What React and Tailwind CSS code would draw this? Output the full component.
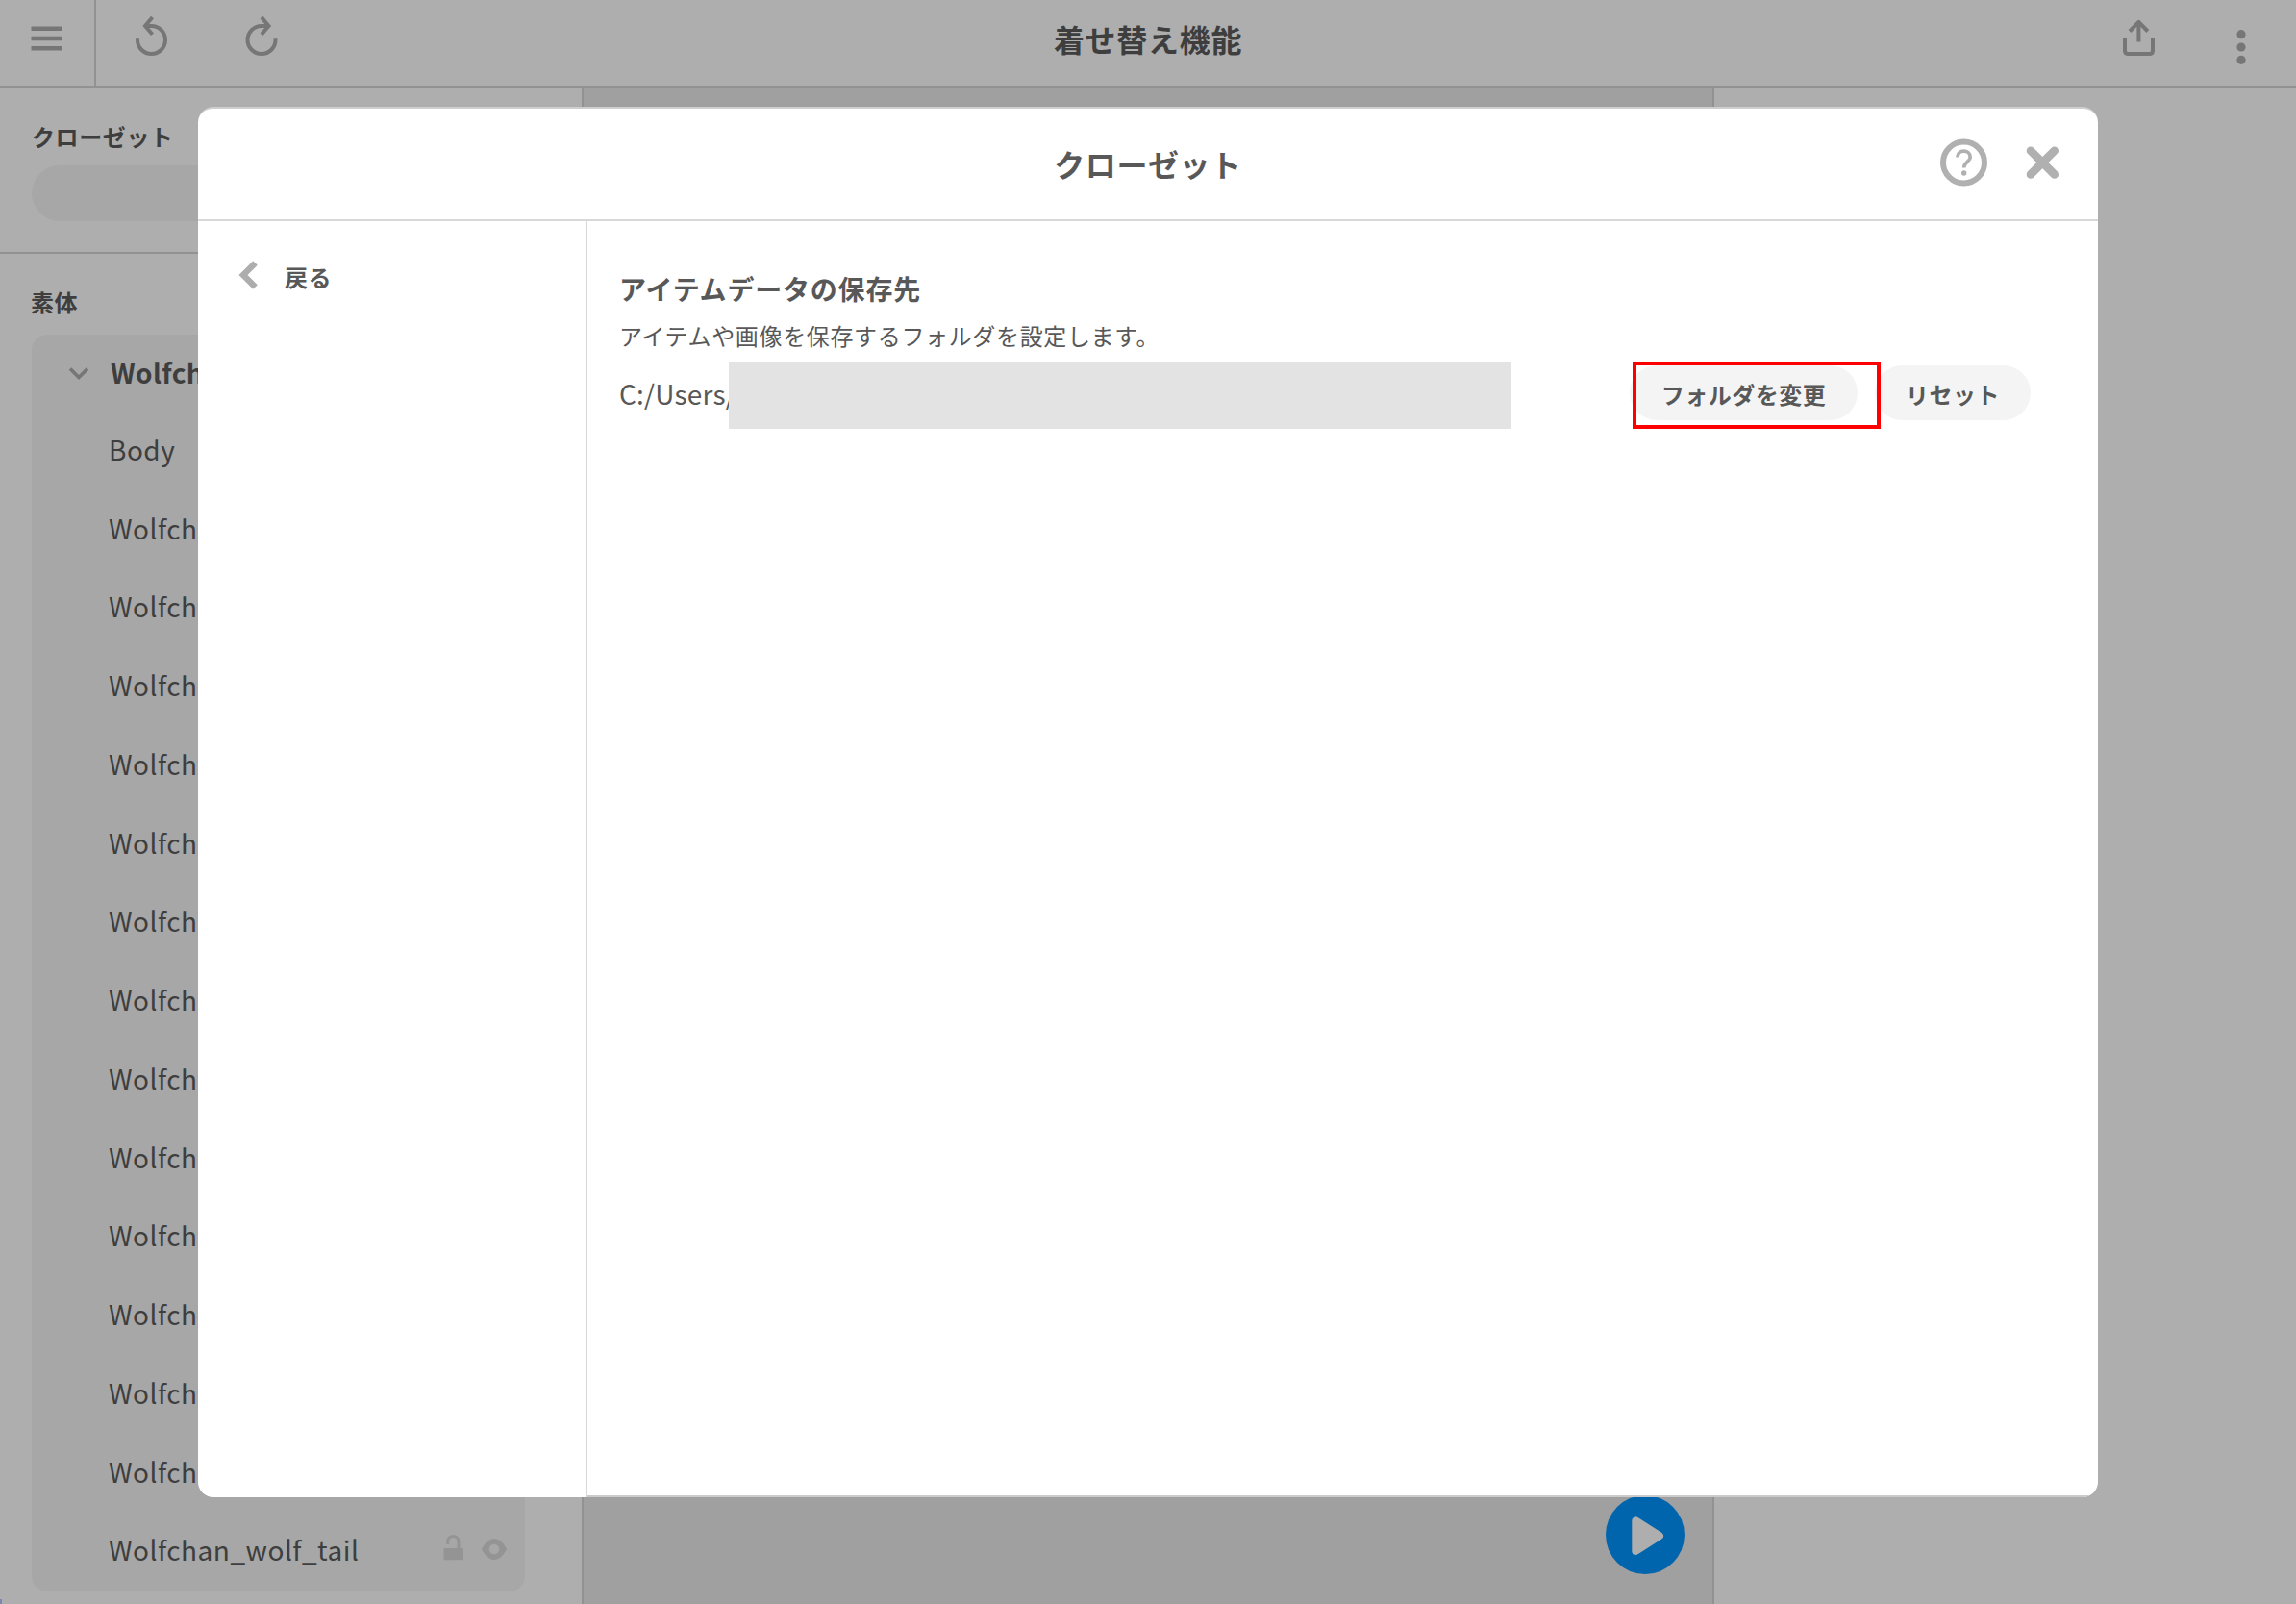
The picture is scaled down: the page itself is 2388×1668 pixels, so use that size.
const rows = [
  'Body',
  ...Array.from({ length: 13 }, () => 'Wolfchan'),
  'Wolfchan_wolf_tail',
];

function MenuIcon() {
  return (
    <svg className="h-[90px] w-[98px] shrink-0" viewBox="0 0 98 90" stroke="#767676" strokeWidth="4.4">
      <path d="M32.5 29.7H65M32.5 40H65M32.5 50.2H65" />
    </svg>
  );
}

function UndoIcon() {
  return (
    <svg className="h-[60px] w-[40px]" viewBox="138 0 40 60" fill="none" stroke="#767676" strokeWidth="4">
      <path d="M143 40.3V41.5A14.5 14.5 0 1 0 157.5 27H151" />
      <path d="M158.5 18L151 27L158.5 35.8" />
    </svg>
  );
}

function RedoIcon() {
  return (
    <svg className="h-[60px] w-[40px]" viewBox="251.5 0 40 60" fill="none" stroke="#767676" strokeWidth="4">
      <path d="M286 40.3V41.5A14.5 14.5 0 1 1 271.5 27H279" />
      <path d="M271.5 18L279 27L271.5 35.8" />
    </svg>
  );
}

function ShareIcon() {
  return (
    <svg className="h-[60px] w-[40px]" viewBox="2204 0 40 60" fill="none" stroke="#767676" strokeWidth="4">
      <path d="M2210 39V52.5Q2210 56 2213.5 56H2235.5Q2239 56 2239 52.5V39" />
      <path d="M2224.4 43.5V23M2215 32.5L2224.4 22.8L2233.8 32.5" strokeLinejoin="round" />
    </svg>
  );
}

function RowIcons() {
  return (
    <svg className="mr-[16px] h-[40px] w-[72px]" viewBox="458 1595 72 40" fill="none" stroke="#949494">
      <path d="M465.7 1610V1606.500A5.700 5.700 0 0 1 477 1606.500V1614.500" strokeWidth="3" />
      <rect x="461.500" y="1614" width="20.500" height="12.200" rx="1" fill="#949494" stroke="none" />
      <path
        d="M501 1615C503.500 1609.500 508.500 1604 514 1604S524.500 1609.500 527 1615C524.500 1620.500 519.500 1626 514 1626S503.500 1620.500 501 1615Z"
        fill="#949494"
        stroke="none"
      />
      <circle cx="514" cy="1615" r="5.300" fill="#a7a7a7" stroke="none" />
    </svg>
  );
}

function Sidebar() {
  return (
    <aside className="flex w-[607px] shrink-0 flex-col border-r-2 border-[#929292] bg-[#aeaeae]">
      <div className="h-[173px] border-b-2 border-[#929292] pl-[33px] pt-[31px]">
        <h2 className="text-[24px] font-bold leading-[40px] tracking-[0.6px]">クローゼット</h2>
        <div className="mt-[10px] h-[58px] w-[513px] rounded-full bg-[#a7a7a7]" />
      </div>
      <h2 className="mt-[30px] pl-[32px] text-[24px] font-bold leading-[40px] tracking-[0.4px]">素体</h2>
      <div className="ml-[33px] mt-[14px] h-[1307px] w-[513px] rounded-[16px] bg-[#a7a7a7]">
        <div className="flex h-[78px] items-center">
          <svg className="ml-[36px] mt-[3px] h-[20px] w-[26px]" viewBox="69 380 26 20" fill="none" stroke="#767676" strokeWidth="3.600">
            <path d="M73 384.500L82 393.500L91 384.500" />
          </svg>
          <span className="ml-[20px] text-[28px] font-bold tracking-[0.4px]">Wolfchan</span>
        </div>
        {rows.map((name, i) => (
          <div key={i} className="flex h-[81.75px] items-center justify-between pl-[80px] text-[28px] tracking-[0.5px]">
            <span>{name}</span>
            {i === rows.length - 1 && <RowIcons />}
          </div>
        ))}
      </div>
    </aside>
  );
}

function ClosetDialog() {
  return (
    <div
      role="dialog"
      className="absolute left-[206px] top-[111px] flex h-[1446px] w-[1976px] flex-col overflow-hidden rounded-[16px] border-t-2 border-[#cfcfcf] bg-white text-[#585858]"
    >
      <div className="grid h-[117px] shrink-0 grid-cols-[1fr_auto_1fr] items-center border-b-2 border-[#d8d8d8]">
        <span />
        <h2 className="mb-[2px] text-[32px] font-bold leading-[48px] tracking-[0.6px]">クローゼット</h2>
        <svg className="mb-[3px] mr-[36px] h-[60px] w-[130px] justify-self-end" viewBox="2016 139 130 60" fill="none" stroke="#b0b0b0">
          <circle cx="2042.500" cy="169" r="21.500" strokeWidth="6" />
          <path
            d="M2036 163.500C2036 159.500 2038.700 157.200 2042.500 157.200S2049.200 159.700 2049.200 163.500C2049.200 168 2042.700 168.500 2042.700 174.500"
            strokeWidth="3.800"
          />
          <circle cx="2042.700" cy="180" r="2.700" fill="#b0b0b0" stroke="none" />
          <path d="M2112 156.700L2136.700 181.400M2136.700 156.700L2112 181.400" strokeWidth="8.600" strokeLinecap="round" />
        </svg>
      </div>
      <div className="flex min-h-0 flex-1">
        <div className="w-[405px] shrink-0 border-r-2 border-[#d8d8d8]">
          <div className="flex items-center pl-[39px] pt-[34px]">
            <svg className="h-[40px] w-[28px]" viewBox="246 266 28 40" fill="none" stroke="#adadad" strokeWidth="6.500">
              <path d="M266.500 273.500L254 286L266.500 298.500" />
            </svg>
            <span className="ml-[23px] mt-[4px] text-[24px] font-bold leading-[40px] tracking-[0.4px]">戻る</span>
          </div>
        </div>
        <div className="flex-1 border-b-2 border-[#cbcbcb] pl-[33px] pt-[50px]">
          <h3 className="text-[28px] font-bold leading-[40px] tracking-[0.8px]">アイテムデータの保存先</h3>
          <p className="mt-[9px] text-[24px] leading-[40px] tracking-[0.65px]">
            アイテムや画像を保存するフォルダを設定します。
          </p>
          <div className="relative mt-[7px] flex h-[70px] items-center">
            <span className="mt-[-4px] w-[114px] whitespace-nowrap text-[28px] leading-[44px] tracking-[0.2px]">C:/Users/</span>
            <div className="relative h-[70px] w-[814px] bg-[#e3e3e3]" />
            <button className="mb-[5px] ml-[123px] h-[57px] w-[237px] rounded-full bg-[#f4f4f4] pt-[3px] text-[24px] font-bold tracking-[0.5px]">
              フォルダを変更
            </button>
            <button className="mb-[5px] ml-[18px] h-[57px] w-[162px] rounded-full bg-[#f4f4f4] pt-[3px] text-[24px] font-bold tracking-[0.5px]">
              リセット
            </button>
            <div className="absolute left-[1054px] top-0 h-[70px] w-[258px] border-4 border-[#ff0000]" />
          </div>
        </div>
      </div>
    </div>
  );
}

export default function App() {
  return (
    <div
      className="relative flex h-[1668px] w-[2388px] flex-col overflow-hidden bg-[#aeaeae] text-[#3e3e3e]"
      style={{ fontFamily: '"Noto Sans CJK JP", sans-serif' }}
    >
      <header className="flex h-[91px] shrink-0 border-b-2 border-[#929292]">
        <div className="w-[100px] border-r-2 border-[#929292]">
          <MenuIcon />
        </div>
        <div className="grid flex-1 grid-cols-[1fr_auto_1fr] items-start">
          <div className="flex gap-[73.500px] pl-[38px]">
            <UndoIcon />
            <RedoIcon />
          </div>
          <h1 className="mr-[100px] text-[32px] font-bold leading-[80px] tracking-[0.7px]">着せ替え機能</h1>
          <div className="flex justify-end gap-[72px] pr-[42px]">
            <ShareIcon />
            <svg className="h-[80px] w-[30px]" viewBox="2316 0 30 80" fill="#767676">
              <circle cx="2331" cy="35.700" r="4.600" />
              <circle cx="2331" cy="49" r="4.600" />
              <circle cx="2331" cy="62.300" r="4.600" />
            </svg>
          </div>
        </div>
      </header>
      <div className="flex min-h-0 flex-1">
        <Sidebar />
        <main className="flex flex-1 items-end justify-end bg-[#a0a0a0]">
          <button className="mb-[31px] mr-[29px] size-[82px] rounded-full bg-[#0065ad]">
            <svg className="size-[82px]" viewBox="0 0 82 82" fill="#aeaeae" stroke="#aeaeae" strokeWidth="8" strokeLinejoin="round">
              <path d="M31.300 26.500V58L56 42.200Z" />
            </svg>
          </button>
        </main>
        <aside className="w-[607px] shrink-0 border-l-2 border-[#929292]" />
      </div>
      <div className="absolute bottom-0 left-0 h-[5px] w-[2px] bg-[#7d88b0]" />
      <ClosetDialog />
    </div>
  );
}
